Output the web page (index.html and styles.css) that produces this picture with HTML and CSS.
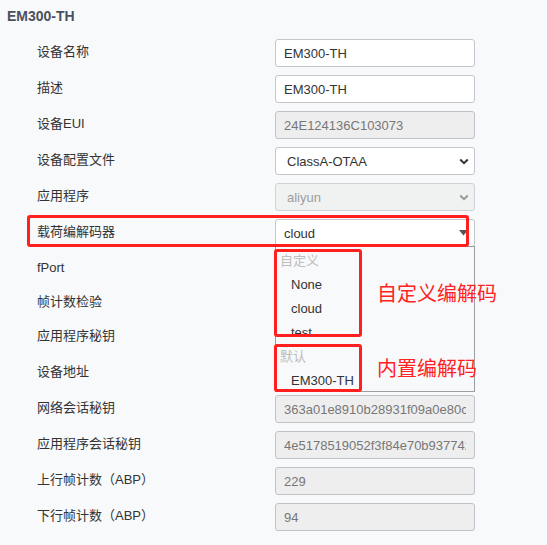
FILE: index.html
```html
<!DOCTYPE html>
<html lang="zh-CN">
<head>
    <meta charset="UTF-8">
    <meta name="viewport" content="width=device-width, initial-scale=1.0">
    <title>EM300-TH</title>
    <link rel="stylesheet" href="styles.css">
</head>
<body>
<div class="page">
    <h2 class="title">EM300-TH</h2>
    <div class="form">
        <div class="row">
            <label class="label" for="devName">设备名称</label>
            <div class="field"><input class="input" id="devName" type="text" value="EM300-TH"></div>
        </div>
        <div class="row">
            <label class="label" for="devDesc">描述</label>
            <div class="field"><input class="input" id="devDesc" type="text" value="EM300-TH"></div>
        </div>
        <div class="row">
            <label class="label" for="devEui">设备EUI</label>
            <div class="field"><input class="input" id="devEui" type="text" value="24E124136C103073" disabled></div>
        </div>
        <div class="row">
            <label class="label" for="profile">设备配置文件</label>
            <div class="field">
                <select class="input select" id="profile">
                    <option>ClassA-OTAA</option>
                </select>
                <svg class="chevron" width="10" height="7" viewBox="0 0 10 7"><path d="M1.2 1.5 L5 5.2 L8.8 1.5" fill="none" stroke="#333" stroke-width="2"/></svg>
            </div>
        </div>
        <div class="row">
            <label class="label" for="app">应用程序</label>
            <div class="field">
                <select class="input select" id="app" disabled>
                    <option>aliyun</option>
                </select>
                <svg class="chevron" width="10" height="7" viewBox="0 0 10 7"><path d="M1.2 1.5 L5 5.2 L8.8 1.5" fill="none" stroke="#999" stroke-width="2"/></svg>
            </div>
        </div>
        <div class="row">
            <label class="label">载荷编解码器</label>
            <div class="field open">
                <div class="input dropdown">
                    <span>cloud</span>
                    <svg class="caret" width="9" height="6" viewBox="0 0 9 6"><path d="M0 0 H9 L4.5 5.5 Z" fill="#555"/></svg>
                </div>
                <ul class="listbox">
                    <li class="group">自定义</li>
                    <li class="option">None</li>
                    <li class="option">cloud</li>
                    <li class="option">test</li>
                    <li class="group">默认</li>
                    <li class="option">EM300-TH</li>
                </ul>
            </div>
        </div>
        <div class="row">
            <label class="label" for="fport">fPort</label>
            <div class="field"><input class="input" id="fport" type="text"></div>
        </div>
        <div class="row short">
            <label class="label">帧计数检验</label>
            <div class="field"></div>
        </div>
        <div class="row">
            <label class="label" for="appKey">应用程序秘钥</label>
            <div class="field"><input class="input" id="appKey" type="text"></div>
        </div>
        <div class="row">
            <label class="label" for="devAddr">设备地址</label>
            <div class="field"><input class="input" id="devAddr" type="text"></div>
        </div>
        <div class="row">
            <label class="label" for="nwkSKey">网络会话秘钥</label>
            <div class="field"><input class="input" id="nwkSKey" type="text" value="363a01e8910b28931f09a0e80c4d7b21" disabled></div>
        </div>
        <div class="row">
            <label class="label" for="appSKey">应用程序会话秘钥</label>
            <div class="field"><input class="input" id="appSKey" type="text" value="4e5178519052f3f84e70b937742a5c10" disabled></div>
        </div>
        <div class="row">
            <label class="label" for="upCnt">上行帧计数（ABP）</label>
            <div class="field"><input class="input" id="upCnt" type="text" value="229" disabled></div>
        </div>
        <div class="row">
            <label class="label" for="downCnt">下行帧计数（ABP）</label>
            <div class="field"><input class="input" id="downCnt" type="text" value="94" disabled></div>
        </div>
    </div>

    <div class="mark mark-codec"></div>
    <div class="mark mark-custom"></div>
    <div class="mark mark-builtin"></div>
    <div class="note note-custom">自定义编解码</div>
    <div class="note note-builtin">内置编解码</div>
</div>
</body>
</html>
```

FILE: styles.css
```css
body {
    margin: 0;
    background-color: #f8f9fb;
    font-family: "Liberation Sans", Arial, "Noto Sans CJK SC", sans-serif;
    font-size: 13px;
    color: #333;
}
.page {
    position: relative;
    height: 545px;
    overflow: hidden;
}
.title {
    margin: 0;
    padding: 8px 7px 0;
    height: 35px;
    box-sizing: border-box;
    font-size: 14px;
    line-height: 16px;
    font-weight: bold;
    color: #4b505c;
}
.form {
    padding-left: 37px;
}
.row {
    display: flex;
    align-items: center;
    height: 36px;
}
.row.short {
    height: 32px;
}
.label {
    width: 238px;
    flex: none;
    line-height: 18px;
    margin-top: -2px;
}
.field {
    position: relative;
    width: 200px;
    height: 28px;
}
.input {
    box-sizing: border-box;
    width: 100%;
    height: 28px;
    margin: 0;
    padding: 0 8px;
    border: 1px solid #c3c6cb;
    border-radius: 3px;
    background-color: #fff;
    font: inherit;
    color: #333;
    outline: none;
}
.input:disabled {
    background-color: #eeeeee;
    color: #777;
    border-color: #bfc2c7;
}
.select {
    appearance: none;
    -webkit-appearance: none;
    padding-left: 11px;
}
.chevron {
    position: absolute;
    right: 6px;
    top: 11px;
    pointer-events: none;
}
.dropdown {
    display: flex;
    align-items: center;
    justify-content: space-between;
    padding-right: 6px;
}
.listbox {
    position: absolute;
    top: 27px;
    left: 0;
    z-index: 2;
    box-sizing: border-box;
    width: 200px;
    margin: 0;
    padding: 0;
    list-style: none;
    border: 1px solid #9a9fa6;
    background-color: #f8f9fb;
}
.listbox li {
    height: 24px;
    line-height: 28px;
}
.group {
    padding-left: 4px;
    color: #bdbdbd;
}
.option {
    padding-left: 15px;
    color: #333;
}
.mark {
    position: absolute;
    z-index: 3;
    box-sizing: border-box;
    border: 3px solid #ff1f1f;
    border-radius: 3px;
}
.mark-codec {
    left: 27px;
    top: 215px;
    width: 442px;
    height: 32px;
}
.mark-custom {
    left: 274px;
    top: 249px;
    width: 88px;
    height: 88px;
}
.mark-builtin {
    left: 274px;
    top: 344px;
    width: 88px;
    height: 48px;
}
.note {
    position: absolute;
    z-index: 3;
    font-family: "Noto Sans CJK SC", sans-serif;
    font-size: 20px;
    line-height: 22px;
    color: #ff2222;
}
.note-custom {
    left: 377px;
    top: 282px;
}
.note-builtin {
    left: 377px;
    top: 357px;
}
```
